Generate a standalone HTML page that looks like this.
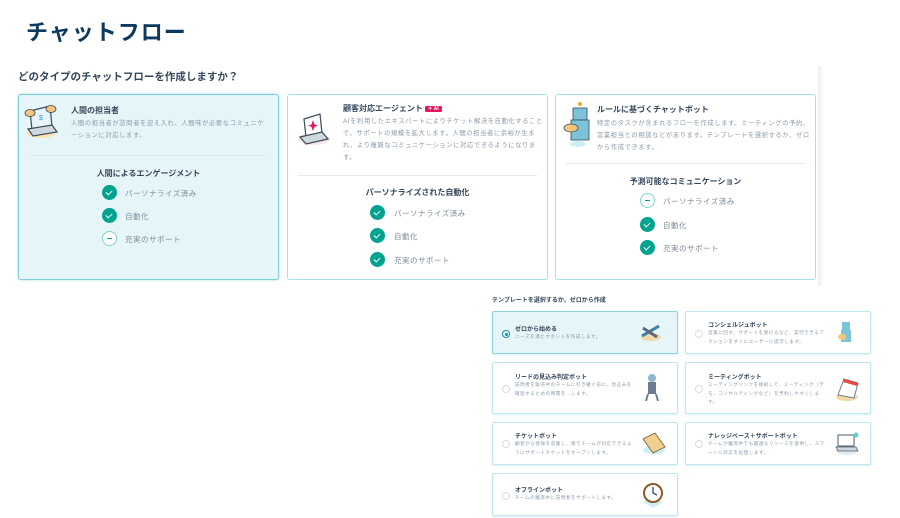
<!DOCTYPE html>
<html><head><meta charset="utf-8"><style>
*{margin:0;padding:0;box-sizing:border-box}
body{width:900px;height:518px;background:#fff;position:relative;overflow:hidden;font-family:"Liberation Sans","Noto Sans CJK JP",sans-serif;color:#33475b}
.a{position:absolute}
h1{position:absolute;left:26px;top:18px;font-size:22px;font-weight:bold;color:#0b3a5e;letter-spacing:1px;line-height:30px}
.q{left:18px;top:69px;font-size:10.5px;font-weight:bold;color:#33475b}
.card{position:absolute;top:94px;height:186px;width:261px;border:1px solid #a6e0e8;border-radius:3px;background:#fff}
.card.sel{background:#e5f5f8;border-color:#7fcfdb;box-shadow:0 0 2px #9dd}
.ct{position:absolute;font-size:8px;font-weight:bold;color:#33475b;white-space:nowrap}
.cd{position:absolute;font-size:6.3px;line-height:12px;color:#8a9aab;letter-spacing:.6px}
.div{position:absolute;left:10px;right:10px;height:1px;background:#e3eaee}
.sub{position:absolute;left:0;right:0;text-align:center;font-size:8px;font-weight:bold;color:#33475b}
.ck{position:absolute;width:15px;height:15px;border-radius:50%;background:#00a38d}
.ck:after{content:"";position:absolute;left:5px;top:3.5px;width:3px;height:5px;border:solid #fff;border-width:0 1.3px 1.3px 0;transform:rotate(45deg)}
.mn{position:absolute;width:15px;height:15px;border-radius:50%;border:1.3px solid #7fd4c7;background:#fff}
.mn:after{content:"";position:absolute;left:3.5px;top:5.8px;width:5.5px;height:1.3px;background:#00a38d}
.lt{position:absolute;font-size:7.5px;color:#7c8a99;letter-spacing:.5px;white-space:nowrap}
.opt{position:absolute;border:1px solid #bfe8ee;border-radius:2px;background:#fff;box-shadow:0 1px 2px #d8eef2}
.opt.sel{background:#e5f5f8;border-color:#8bd3de}
.rd{position:absolute;left:9px;width:8px;height:8px;border-radius:50%;border:1px solid #d5dde3;background:#fff}
.opt.sel .rd{border-color:#0091ae}
.opt.sel .rd:after{content:"";position:absolute;left:1.5px;top:1.5px;width:3px;height:3px;border-radius:50%;background:#0091ae}
.ot{position:absolute;left:22px;font-size:6px;font-weight:bold;color:#33475b;white-space:nowrap}
.od{position:absolute;left:22px;font-size:4.6px;line-height:8.5px;color:#8a9aab;width:118px;letter-spacing:.5px}
.ic{position:absolute}
</style></head><body>
<h1>チャットフロー</h1>
<div class="a q">どのタイプのチャットフローを作成しますか？</div>
<div class="a" style="left:818px;top:66px;width:5px;height:220px;background:linear-gradient(90deg,#eee,#fafafa)"></div>

<div class="card sel" style="left:18px">
 <svg class="ic" style="left:5px;top:6px" width="36" height="40" viewBox="0 0 36 40"><ellipse cx="17" cy="32" rx="14" ry="5" fill="#fbe3b0"/><path d="M6 10 L26 5 L28 25 L8 29Z" fill="#e8f4fb" stroke="#3b4a5a" stroke-width="1.2"/><path d="M4 28 L28 24 L33 31 L9 35Z" fill="#cfd8df" stroke="#3b4a5a" stroke-width="1.2"/><ellipse cx="6" cy="12" rx="5" ry="3.5" fill="#f6c77b" stroke="#3b4a5a" stroke-width=".8"/><ellipse cx="27" cy="8" rx="5" ry="3.5" fill="#f6c77b" stroke="#3b4a5a" stroke-width=".8"/><text x="15" y="19" font-size="7" fill="#39c">$</text></svg>
 <div class="ct" style="left:52px;top:10px">人間の担当者</div>
 <div class="cd" style="left:52px;top:23px;width:200px">人間の担当者が訪問者を迎え入れ、人間味が必要なコミュニケーションに対応します。</div>
 <div class="div" style="top:60px"></div>
 <div class="sub" style="top:73px">人間によるエンゲージメント</div>
 <div class="ck" style="left:83px;top:90px"></div><div class="lt" style="left:106px;top:93px">パーソナライズ済み</div>
 <div class="ck" style="left:83px;top:113px"></div><div class="lt" style="left:106px;top:116px">自動化</div>
 <div class="mn" style="left:83px;top:136px"></div><div class="lt" style="left:106px;top:139px">充実のサポート</div>
</div>

<div class="card" style="left:287px">
 <svg class="ic" style="left:8px;top:18px" width="36" height="34" viewBox="0 0 36 34"><ellipse cx="18" cy="26" rx="16" ry="6" fill="#fde4e8"/><path d="M8 6 L24 1 L26 20 L10 24Z" fill="#fff" stroke="#3b4a5a" stroke-width="1.2"/><path d="M4 24 L26 19 L32 26 L10 31Z" fill="#cfd8df" stroke="#3b4a5a" stroke-width="1.2"/><path d="M17 7 L18.5 11.5 L22 12.5 L18.5 14 L17 18 L15.5 14 L12 12.5 L15.5 11.5Z" fill="#e8175d"/></svg>
 <div class="ct" style="left:55px;top:8px">顧客対応エージェント <span style="background:#e8175d;color:#fff;font-size:5px;padding:0 3px;border-radius:1px;vertical-align:1px">✦ AI</span></div>
 <div class="cd" style="left:55px;top:21px;width:200px">AIを利用したエキスパートによりチケット解決を自動化することで、サポートの規模を拡大します。人間の担当者に余裕が生まれ、より複雑なコミュニケーションに対応できるようになります。</div>
 <div class="div" style="top:80px"></div>
 <div class="sub" style="top:92px">パーソナライズされた自動化</div>
 <div class="ck" style="left:82px;top:110px"></div><div class="lt" style="left:106px;top:113px">パーソナライズ済み</div>
 <div class="ck" style="left:82px;top:133px"></div><div class="lt" style="left:106px;top:136px">自動化</div>
 <div class="ck" style="left:82px;top:157px"></div><div class="lt" style="left:106px;top:160px">充実のサポート</div>
</div>

<div class="card" style="left:555px">
 <svg class="ic" style="left:7px;top:5px" width="30" height="50" viewBox="0 0 30 50"><ellipse cx="15" cy="44" rx="8" ry="3" fill="#cdeef3"/><rect x="10" y="8" width="14" height="12" fill="#7cc3d9" stroke="#3b4a5a" stroke-width=".8"/><rect x="8" y="20" width="18" height="20" fill="#7cc3d9" stroke="#3b4a5a" stroke-width=".8"/><ellipse cx="8" cy="28" rx="7" ry="4" fill="#f6c77b" stroke="#3b4a5a" stroke-width=".8"/><circle cx="17" cy="4" r="2" fill="#f5a623"/></svg>
 <div class="ct" style="left:41px;top:9px">ルールに基づくチャットボット</div>
 <div class="cd" style="left:41px;top:23px;width:215px">特定のタスクが含まれるフローを作成します。ミーティングの予約、営業担当との相談などがあります。テンプレートを選択するか、ゼロから作成できます。</div>
 <div class="div" style="top:68px"></div>
 <div class="sub" style="top:81px">予測可能なコミュニケーション</div>
 <div class="mn" style="left:84px;top:98px"></div><div class="lt" style="left:107px;top:101px">パーソナライズ済み</div>
 <div class="ck" style="left:84px;top:122px"></div><div class="lt" style="left:107px;top:125px">自動化</div>
 <div class="ck" style="left:84px;top:145px"></div><div class="lt" style="left:107px;top:148px">充実のサポート</div>
</div>

<div class="a" style="left:492px;top:295px;font-size:6px;font-weight:bold;color:#33475b">テンプレートを選択するか、ゼロから作成</div>

<div class="opt sel" style="left:492px;top:311px;width:186px;height:43px"><div class="rd" style="top:18px"></div><div class="ot" style="top:12px">ゼロから始める</div><div class="od" style="top:21px">ニーズを満たすボットを作成します。</div>
<svg class="ic" style="left:146px;top:10px" width="24" height="22" viewBox="0 0 24 22"><ellipse cx="12" cy="15" rx="10" ry="4" fill="#f3d9a8"/><path d="M3 14 L20 4" stroke="#3a7fa6" stroke-width="3"/><path d="M4 6 L18 15" stroke="#5b6b7b" stroke-width="3"/></svg></div>
<div class="opt" style="left:685px;top:311px;width:186px;height:43px"><div class="rd" style="top:18px"></div><div class="ot" style="top:8px">コンシェルジュボット</div><div class="od" style="top:17px">営業に回す、サポートを受けるなど、実行できるアクションをすぐにユーザーに提示します。</div>
<svg class="ic" style="left:152px;top:8px" width="16" height="26" viewBox="0 0 16 26"><rect x="4" y="2" width="8" height="8" fill="#7cc3d9"/><rect x="3" y="10" width="10" height="12" fill="#7cc3d9"/><ellipse cx="4" cy="17" rx="4" ry="3" fill="#f6c77b"/></svg></div>

<div class="opt" style="left:492px;top:362px;width:186px;height:52px"><div class="rd" style="top:22px"></div><div class="ot" style="top:9px">リードの見込み判定ボット</div><div class="od" style="top:18px">訪問者を販売中のチームに引き継ぐ前に、見込みを確認するための時間を…します。</div>
<svg class="ic" style="left:152px;top:10px" width="14" height="30" viewBox="0 0 14 30"><circle cx="7" cy="5" r="4" fill="#8fb7cf"/><rect x="3" y="9" width="8" height="12" fill="#6b7d8f"/><path d="M3 21 L1 28 M11 21 L13 28" stroke="#6b7d8f" stroke-width="2"/></svg></div>
<div class="opt" style="left:685px;top:362px;width:186px;height:52px"><div class="rd" style="top:22px"></div><div class="ot" style="top:9px">ミーティングボット</div><div class="od" style="top:18px">ミーティングリンクを接続して、ミーティング（デモ、コンサルティングなど）を予約しやすくします。</div>
<svg class="ic" style="left:148px;top:10px" width="26" height="30" viewBox="0 0 26 30"><ellipse cx="13" cy="24" rx="11" ry="4" fill="#f3d9a8"/><path d="M4 22 L10 6 L24 10 L20 25Z" fill="#fff" stroke="#6b7d8f"/><path d="M10 6 L24 10 L23 13 L9 9Z" fill="#e44d3a"/></svg></div>

<div class="opt" style="left:492px;top:422px;width:186px;height:43px"><div class="rd" style="top:17px"></div><div class="ot" style="top:8px">チケットボット</div><div class="od" style="top:17px">顧客から情報を収集し、後でチームが対応できるようにサポートチケットをオープンします。</div>
<svg class="ic" style="left:148px;top:8px" width="26" height="26" viewBox="0 0 26 26"><ellipse cx="13" cy="19" rx="11" ry="4" fill="#cdeef3"/><path d="M2 8 L14 2 L24 16 L12 22Z" fill="#f3cf8f" stroke="#6b5b3b" stroke-width=".8"/></svg></div>
<div class="opt" style="left:685px;top:422px;width:186px;height:43px"><div class="rd" style="top:17px"></div><div class="ot" style="top:8px">ナレッジベース＋サポートボット</div><div class="od" style="top:17px">チームが離席中でも最適なリソースを提供し、スマートに対応を処理します。</div>
<svg class="ic" style="left:148px;top:8px" width="26" height="26" viewBox="0 0 26 26"><ellipse cx="13" cy="20" rx="11" ry="4" fill="#e4ecf0"/><rect x="4" y="4" width="16" height="11" fill="#fff" stroke="#4a5a6a"/><path d="M2 16 L22 16 L24 20 L4 20Z" fill="#cfd8df" stroke="#4a5a6a" stroke-width=".8"/><circle cx="22" cy="4" r="2.5" fill="#6cc"/></svg></div>

<div class="opt" style="left:492px;top:473px;width:186px;height:43px"><div class="rd" style="top:18px"></div><div class="ot" style="top:11px">オフラインボット</div><div class="od" style="top:20px">チームの離席中に訪問者をサポートします。</div>
<svg class="ic" style="left:149px;top:8px" width="22" height="28" viewBox="0 0 22 28"><path d="M1 20 L11 15 L21 20 L11 26Z" fill="#cdeef3"/><circle cx="11" cy="11" r="9" fill="#fff" stroke="#8b5a2b" stroke-width="2"/><path d="M11 5 L11 11 L15 13" stroke="#33475b" stroke-width="1.3" fill="none"/></svg></div>
</body></html>
